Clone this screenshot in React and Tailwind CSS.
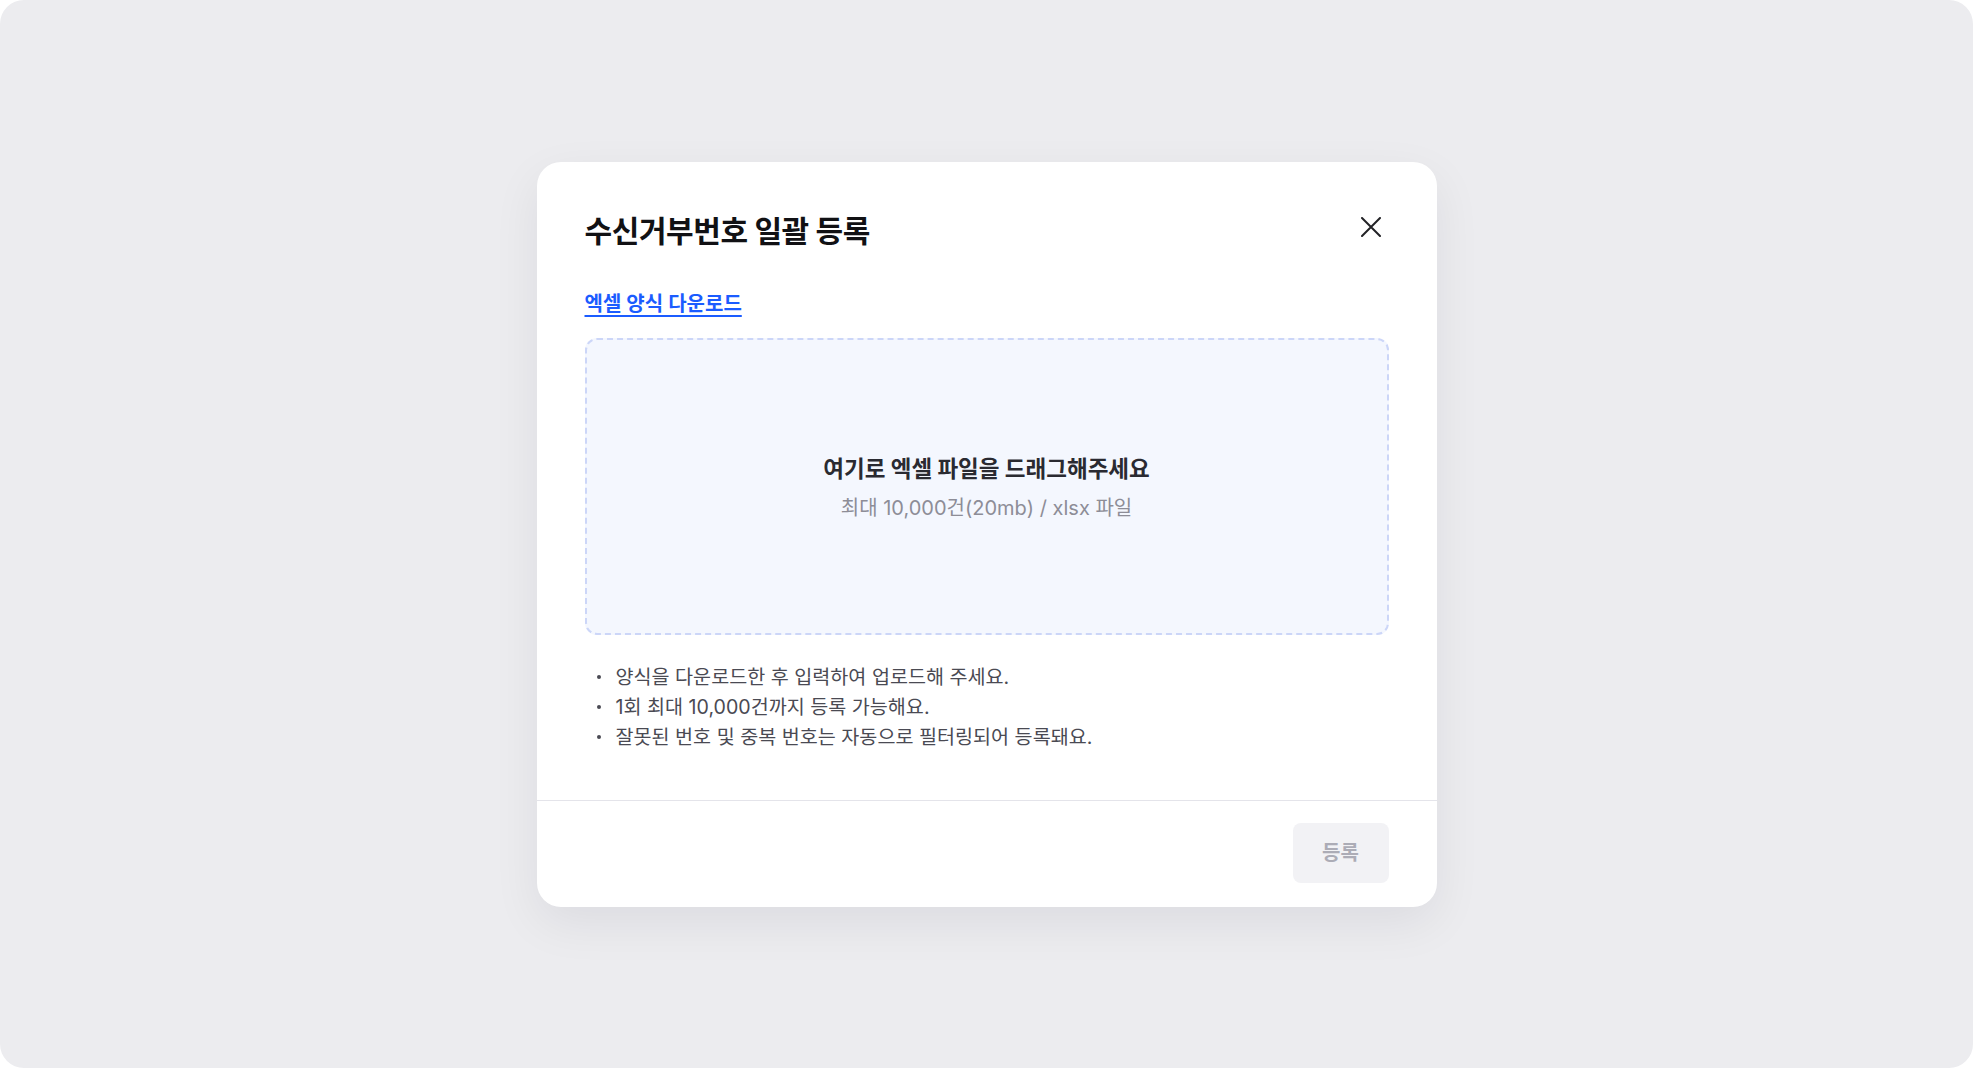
import React from "react";

const notes = [
  "양식을 다운로드한 후 입력하여 업로드해 주세요.",
  "1회 최대 10,000건까지 등록 가능해요.",
  "잘못된 번호 및 중복 번호는 자동으로 필터링되어 등록돼요.",
];

const CloseIcon = () => (
  <svg width="20" height="20" viewBox="0 0 20 20" fill="none">
    <path d="M1 1L19 19M19 1L1 19" stroke="#222226" strokeWidth="2" strokeLinecap="round" />
  </svg>
);

const App = () => {
  return (
    <div
      className="h-[1068px] w-full bg-white"
      style={{ fontFamily: 'Inter, "Noto Sans CJK KR", "Noto Sans", sans-serif' }}
    >
      <div className="flex h-full w-full items-center justify-center rounded-[24px] bg-[#ececef]">
        <div className="w-[900px] rounded-[24px] bg-white shadow-[0_16px_48px_rgba(20,20,40,0.07)]">
          <div className="px-12 pt-[51px] pb-[48px]">
            <div className="flex items-start justify-between">
              <h2 className="text-[30px] leading-[36px] font-bold tracking-[-0.4px] text-[#111114]">
                수신거부번호 일괄 등록
              </h2>
              <button className="-mt-[4px] flex h-9 w-9 items-center justify-center">
                <CloseIcon />
              </button>
            </div>

            <a
              href="#"
              className="mt-[42px] inline-block text-[20px] leading-[26px] font-semibold text-[#1b5cff] underline decoration-2 underline-offset-[4px]"
            >
              엑셀 양식 다운로드
            </a>

            <div className="mt-[21px] flex h-[297px] flex-col items-center justify-center rounded-[12px] border-2 border-dashed border-[#ccd6f8] bg-[#f4f7fe] pt-[4px]">
              <p className="text-[22.5px] leading-[32px] font-bold text-[#2a2a31]">
                여기로 엑셀 파일을 드래그해주세요
              </p>
              <p className="mt-[8px] text-[20px] leading-[30px] text-[#8d8d97]">
                최대 10,000건(20mb) / xlsx 파일
              </p>
            </div>

            <ul className="mt-[27px] pl-[12px]">
              {notes.map((note) => (
                <li key={note} className="flex items-center text-[19.6px] leading-[30px] text-[#4a4a53]">
                  <span className="mr-[15px] h-[4px] w-[4px] rounded-full bg-[#4a4a53]" />
                  {note}
                </li>
              ))}
            </ul>
          </div>

          <div className="flex justify-end border-t border-[#e4e4ea] px-12 pt-[22px] pb-[24px]">
            <button className="h-[60px] w-[96px] rounded-[8px] bg-[#f2f2f5] text-[20px] font-semibold text-[#acacb6]">
              등록
            </button>
          </div>
        </div>
      </div>
    </div>
  );
};

export default App;
